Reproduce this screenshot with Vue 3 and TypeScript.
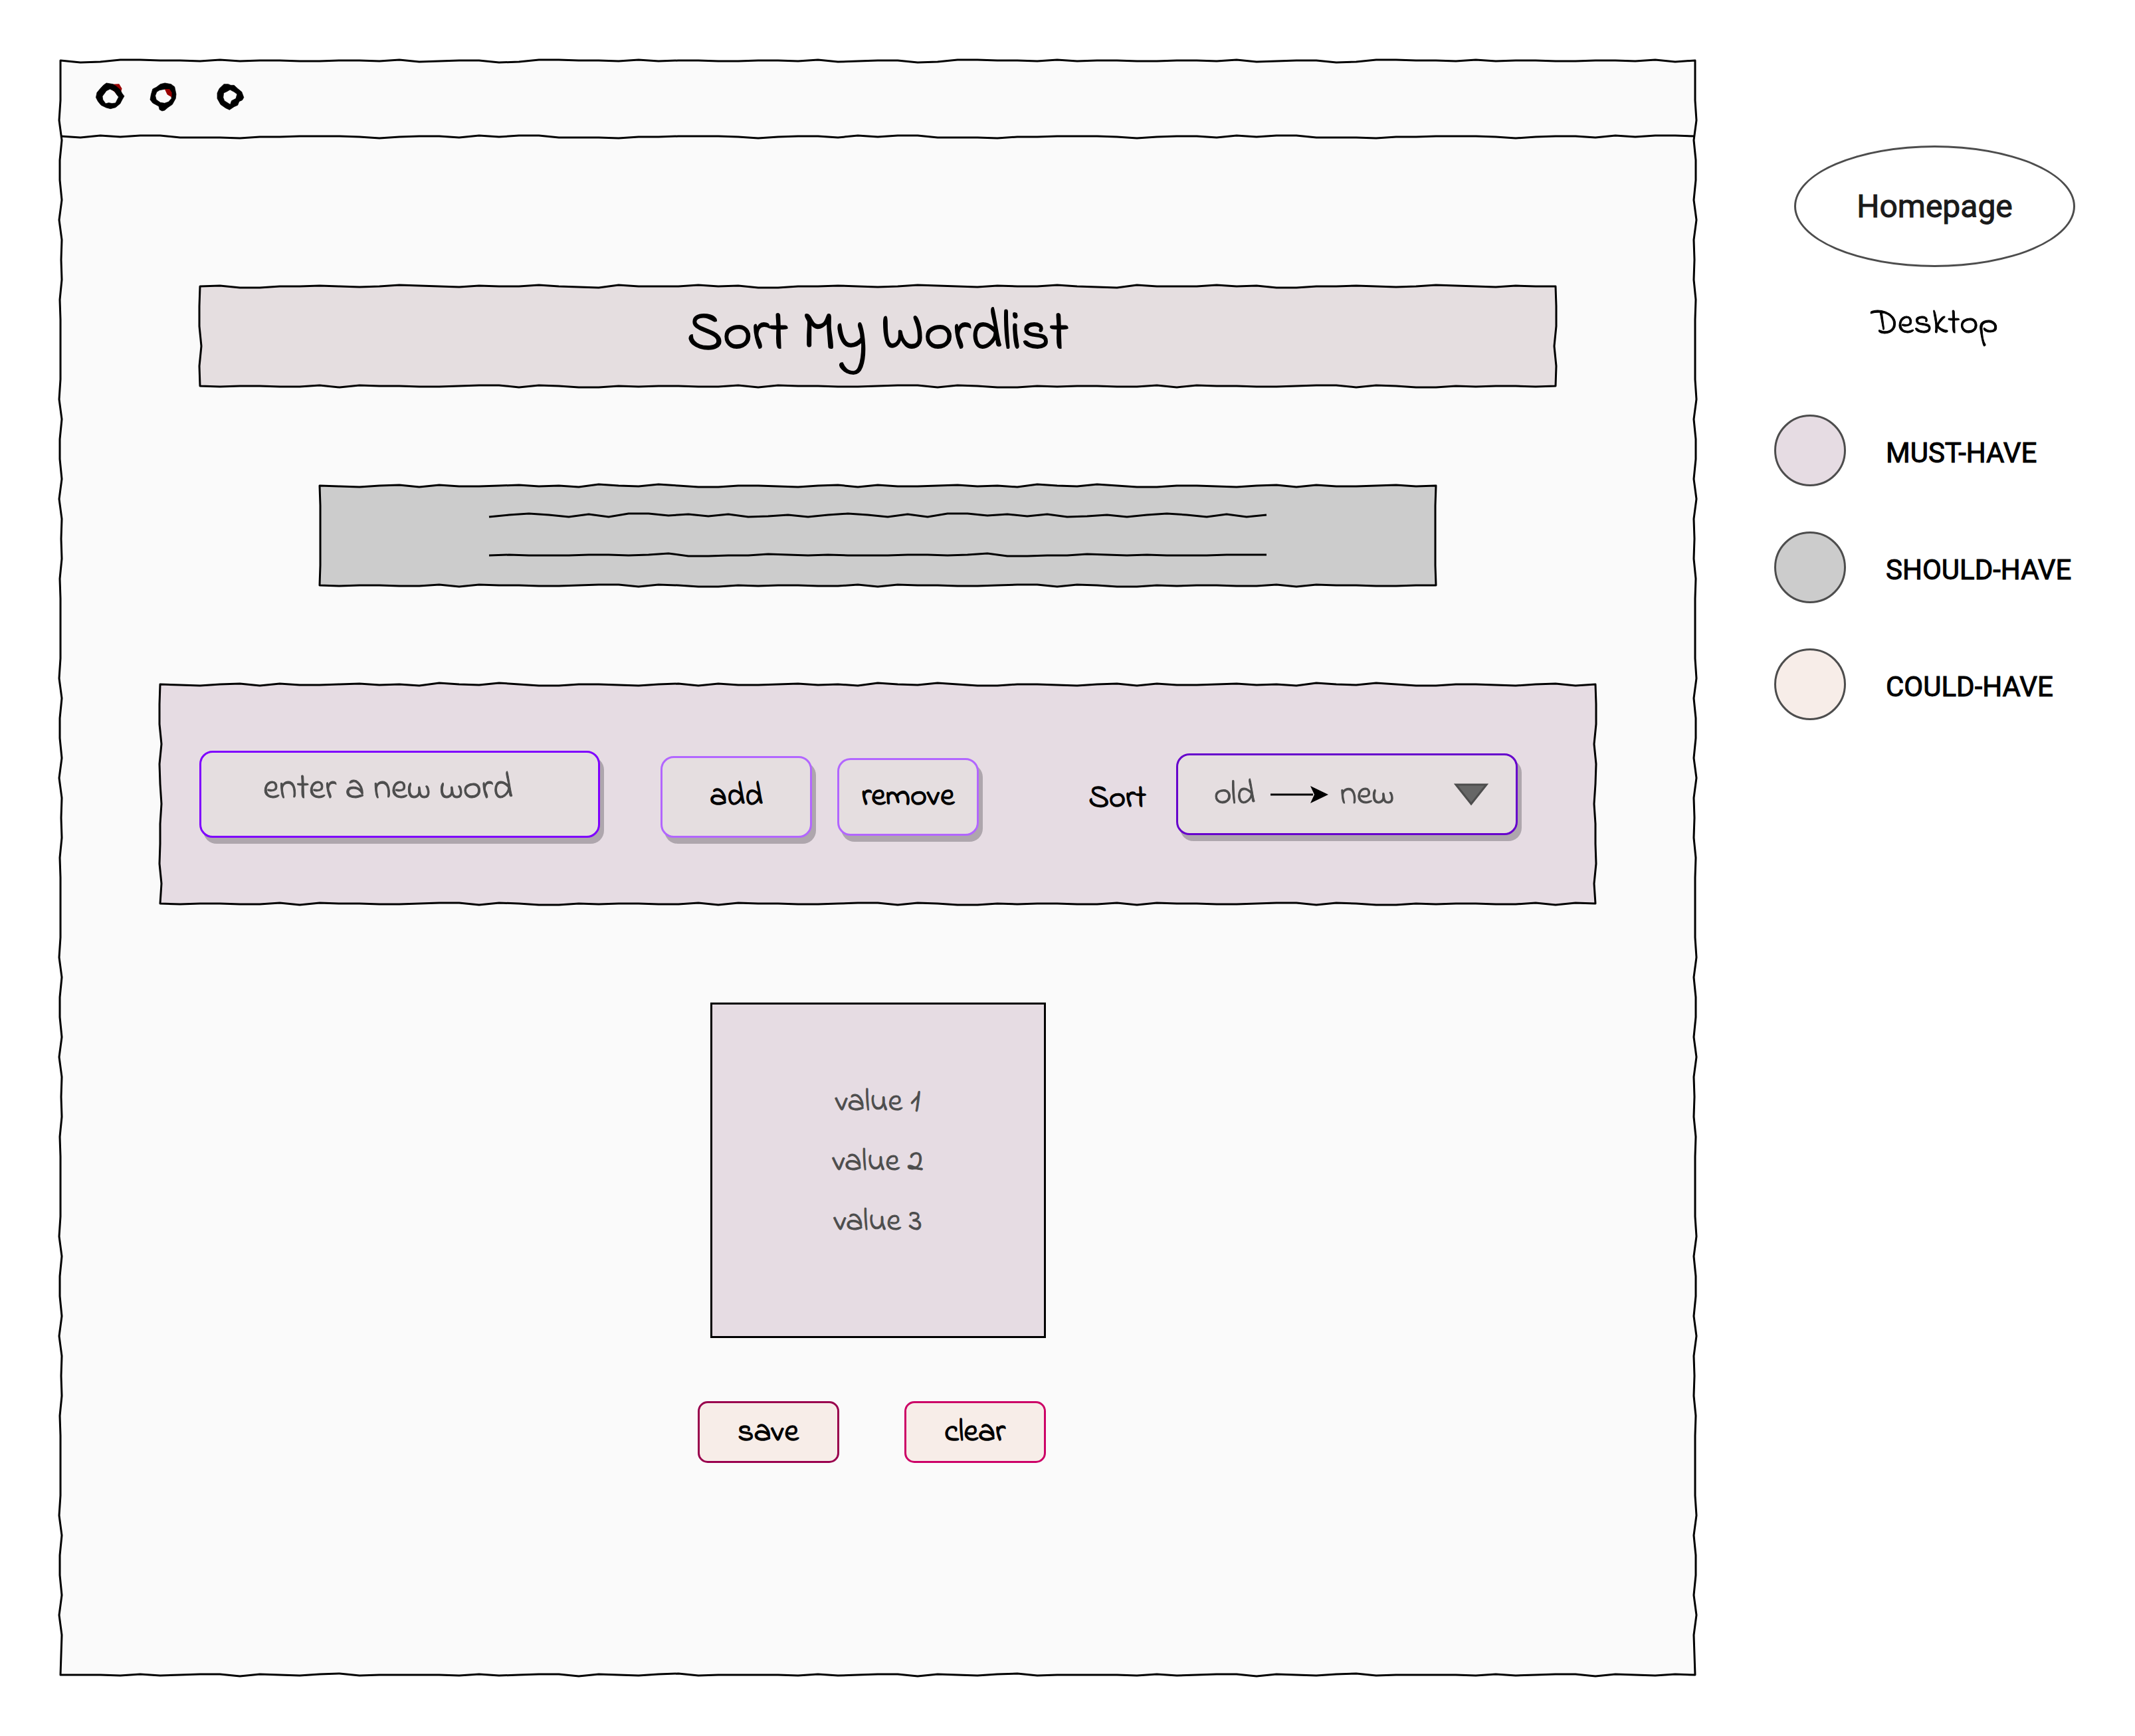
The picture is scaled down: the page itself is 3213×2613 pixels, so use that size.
<script setup lang="ts">
import { ref } from 'vue'

type Edge = number[]

interface LegendItem {
  label: string
  tone: string
}

const STEP = 30

/* Hand-drawn jitter, in pixels, for successive 30px steps along an edge. */
const frameTop: Edge = [0, 3, 2, -1, -1, 0, 0, 1, -1, 1, 0, 0, 1, 1, 0, 0, 1, -1, 2, 1, 0]
const frameSide: Edge = [0, 0, 0, -2, 2, -1, -1, 2, -2, 2, 1, 2, -1, 0]
const frameBottom: Edge = [0, 0, 0, 1, -1, 1, 0, -1, -1, 2, -1, 0, 1, -1, -2, 1, 0]
const dividerEdge: Edge = [0, 2, -1, 1, -1, -1, 2, 2, 2, 3, 1, 1, 0, 0, 0, 1, 3, 1, 0]
const panelTop: Edge = [0, -1, 2, 2, 0, 0, -1, 0, 1, 0, -2, -1, 0, 1, -1, 0, 0, -2, 0, 1, 2, -2, 0, 0, 0, -2]
const panelBottom: Edge = [0, 1, 0, 0, 1, 1, -1, 2, -1, 0, 0, 1, 1, 0, -1, -1, 2, -1, 0, 2, 2]
const panelSide: Edge = [0, -1, -1, 2, -1, 0, 2, 0, 0, -1, 2]
const greyTop: Edge = [0, 1, 2, 0, -1, 2, -1, 1, 1, 0, -1, 1, 0, 2, -2, 0, 1, -2, 0, 2, 2, 0]
const greySide: Edge = [0, 1, 1, 1, 1]
const ruleOne: Edge = [3, 0, -2, 0, 3, -1, 3, -2, -2, 1, -1, 2, -1, 3, 2, 0]
const ruleTwo: Edge = [1, 0, 1, 1, 1, 0, 0, 1, 0, -2, 2, 2, 1, 1, -1, 0]

function walk(length: number, edge: Edge): Array<[number, number]> {
  const count = Math.floor(length / STEP)
  const points: Array<[number, number]> = []
  for (let i = 1; i < count; i++) points.push([i * STEP, edge[i % edge.length]])
  return points
}

function sketchLine(length: number, edge: Edge): string {
  const middle = walk(length, edge).map(([x, y]) => `L${x} ${y}`)
  return `M0 ${edge[0]}${middle.join('')}L${length} 0`
}

function sketchBox(w: number, h: number, top: Edge, side: Edge, bottom: Edge): string {
  const north = walk(w, top).map(([x, y]) => `L${x} ${y}`)
  const east = walk(h, side).map(([y, x]) => `L${w - x} ${y}`)
  const south = walk(w, bottom).reverse().map(([x, y]) => `L${x} ${h + y}`)
  const west = walk(h, side).reverse().map(([y, x]) => `L${x} ${y}`)
  return `M0 0${north.join('')}L${w} 0${east.join('')}L${w} ${h}${south.join('')}L0 ${h}${west.join('')}Z`
}

const windowPath = sketchBox(2460, 2430, frameTop, frameSide, frameBottom)
const dividerPath = sketchLine(2460, dividerEdge)
const titlePath = sketchBox(2040, 150, panelTop, panelSide, panelBottom)
const greyPath = sketchBox(1680, 150, greyTop, greySide, panelBottom)
const controlsPath = sketchBox(2160, 330, greyTop, panelSide, panelBottom)
const ruleOnePath = sketchLine(1170, ruleOne)
const ruleTwoPath = sketchLine(1170, ruleTwo)

const word = ref('')
const order = ref('old-new')
const values = ['value 1', 'value 2', 'value 3']
const legend: LegendItem[] = [
  { label: 'MUST-HAVE', tone: 'must' },
  { label: 'SHOULD-HAVE', tone: 'should' },
  { label: 'COULD-HAVE', tone: 'could' },
]
</script>

<template>
  <div class="page">
    <main class="window">
      <svg class="sketch" viewBox="0 0 2460 2430" preserveAspectRatio="none" aria-hidden="true">
        <path class="fill-window" :d="windowPath" />
      </svg>

      <header class="titlebar">
        <svg class="dots" viewBox="186 150 627 150" preserveAspectRatio="none" aria-hidden="true">
          <path class="spot" d="M252 190L262 170L286 169L297 190L294 203L275 212Z" />
          <path class="ring" d="M236 165L262 170L275 180L290 195L298 212L306 224L298 240L290 258L272 275L252 281L235 276L215 265L203 248L195 230L199 208L212 190L224 175ZM250 192L268 202L275 215L284 228L272 255L258 257L245 254L233 258L222 240L220 225L236 200Z" />
          <path class="ring" d="M466 165L490 170L504 182L510 215L508 235L495 262L478 275L465 288L455 291L445 285L442 270L418 255L408 240L412 215L418 192L432 184L448 170ZM445 197L468 192L480 192L490 210L492 235L480 250L465 256L448 253L432 240L428 222L434 205Z" />
          <path class="spot" d="M465 192L484 192L493 208L493 229L475 217Z" />
          <path class="ring" d="M698 170L715 170L725 175L738 175L752 190L768 205L776 230L770 242L758 248L752 265L738 272L720 286L705 278L685 262L672 235L672 210L680 190ZM697 210L710 203L722 195L738 205L750 215L745 235L728 245L723 262L700 245L695 230Z" />
        </svg>
        <svg class="divider" viewBox="0 0 2460 2" preserveAspectRatio="none" aria-hidden="true">
          <path class="pen" :d="dividerPath" />
        </svg>
      </header>

      <div class="content">
        <section class="panel title-panel">
          <svg class="sketch" viewBox="0 0 2040 150" preserveAspectRatio="none" aria-hidden="true">
            <path class="fill-title" :d="titlePath" />
          </svg>
          <h1>Sort My Wordlist</h1>
        </section>

        <section class="panel text-panel">
          <svg class="sketch" viewBox="0 0 1680 150" preserveAspectRatio="none" aria-hidden="true">
            <path class="fill-grey" :d="greyPath" />
          </svg>
          <svg class="rule" viewBox="0 0 1170 2" preserveAspectRatio="none" aria-hidden="true">
            <path class="pen" :d="ruleOnePath" />
          </svg>
          <svg class="rule" viewBox="0 0 1170 2" preserveAspectRatio="none" aria-hidden="true">
            <path class="pen" :d="ruleTwoPath" />
          </svg>
        </section>

        <form class="panel controls" @submit.prevent>
          <svg class="sketch" viewBox="0 0 2160 330" preserveAspectRatio="none" aria-hidden="true">
            <path class="fill-must" :d="controlsPath" />
          </svg>
          <input v-model="word" class="field word" type="text" placeholder="enter a new word" aria-label="New word" />
          <div class="actions">
            <button class="field add" type="button">add</button>
            <button class="field remove" type="button">remove</button>
          </div>
          <label class="sort-label" for="sort-order">Sort</label>
          <div class="select-wrap">
            <select id="sort-order" v-model="order" class="field order">
              <option value="old-new">old&emsp;&emsp;&ensp;new</option>
              <option value="new-old">new&emsp;&emsp;&ensp;old</option>
            </select>
            <svg class="arrow" viewBox="0 0 88 28" aria-hidden="true">
              <path d="M0 14H64" fill="none" stroke="#000" stroke-width="3" />
              <path d="M87 14L60 27L66 14L60 1Z" />
            </svg>
            <svg class="caret" viewBox="0 0 52 34" aria-hidden="true">
              <path d="M3 2H49L26 31Z" fill="#666" stroke="#4d4d4d" stroke-width="3" />
            </svg>
          </div>
        </form>

        <section class="results">
          <ul class="values">
            <li v-for="value in values" :key="value">{{ value }}</li>
          </ul>
          <div class="result-actions">
            <button class="small save" type="button">save</button>
            <button class="small clear" type="button">clear</button>
          </div>
        </section>
      </div>
    </main>

    <aside class="notes">
      <div class="page-name">Homepage</div>
      <p class="device">Desktop</p>
      <ul class="legend">
        <li v-for="item in legend" :key="item.label">
          <span class="swatch" :class="item.tone"></span>
          <span class="legend-label">{{ item.label }}</span>
        </li>
      </ul>
    </aside>
  </div>
</template>

<style>
body {
  margin: 0;
  background: #fff;
}
</style>

<style scoped>
* {
  box-sizing: border-box;
}

.page {
  display: flex;
  padding: 91px 90px 92px 91px;
  font-family: "Indie Flower", Lato, sans-serif;
  font-size: 48px;
  line-height: 60px;
  color: #000;
  -webkit-text-stroke: 1px currentColor;
}

.window {
  position: relative;
  flex: 1;
}

.sketch {
  position: absolute;
  inset: 0;
  width: 100%;
  height: 100%;
  overflow: visible;
}

.sketch path,
.pen {
  stroke: #000;
  stroke-width: 3px;
  stroke-linejoin: round;
  vector-effect: non-scaling-stroke;
}

.pen {
  fill: none;
}

.fill-window {
  fill: #fafafa;
}

.fill-title {
  fill: #e5dee0;
}

.fill-grey {
  fill: #ccc;
}

.fill-must {
  fill: #e6dce3;
}

.titlebar {
  position: relative;
  display: flex;
  flex-direction: column;
  justify-content: space-between;
  height: 116px;
  padding-top: 29px;
}

.dots {
  display: block;
  width: 240px;
  height: 50px;
  margin-left: 50px;
}

.ring {
  fill: #000;
  fill-rule: evenodd;
  stroke: #000;
  stroke-width: 2px;
  stroke-linejoin: round;
}

.spot {
  fill: #900;
}

.divider,
.rule {
  display: block;
  width: 100%;
  height: 2px;
  overflow: visible;
}

.content {
  position: relative;
  padding: 224px 150px 319px;
}

.panel {
  position: relative;
}

.title-panel {
  display: flex;
  align-items: center;
  justify-content: center;
  height: 150px;
  margin: 0 60px 150px;
}

h1 {
  position: relative;
  margin: 0;
  padding-bottom: 4px;
  font-size: 84px;
  font-weight: 400;
  line-height: 90px;
  -webkit-text-stroke-width: 2px;
}

.text-panel {
  display: flex;
  flex-direction: column;
  gap: 58px;
  height: 150px;
  margin: 0 240px 149px;
  padding: 44px 255px 0;
}

.rule {
  position: relative;
}

.controls {
  display: flex;
  align-items: center;
  height: 330px;
  padding: 0 117px 0 59px;
}

.field {
  position: relative;
  margin: 0;
  border: 3px solid #b266ff;
  border-radius: 20px;
  background: #e5dee0;
  box-shadow: 6px 9px 0 #aea6ad;
  color: #000;
  font: inherit;
  -webkit-text-stroke: 1px currentColor;
}

.word {
  width: 603px;
  height: 131px;
  padding: 0 90px 14px 93px;
  border-color: #7f00ff;
  font-size: 54px;
}

.word::placeholder {
  color: #4d4d4d;
  opacity: 1;
}

.actions {
  position: relative;
  display: flex;
  align-items: center;
  gap: 38px;
  margin: 8px 0 0 91px;
}

.add,
.remove,
.small {
  padding: 0;
  font-weight: 700;
  -webkit-text-stroke-width: 0;
}

.add {
  width: 228px;
  height: 123px;
}

.remove {
  width: 213px;
  height: 117px;
}

.sort-label {
  position: relative;
  margin-left: auto;
  padding-top: 14px;
  font-weight: 700;
  -webkit-text-stroke-width: 0;
}

.select-wrap {
  position: relative;
  margin-left: 45px;
}

.order {
  display: block;
  width: 514px;
  height: 123px;
  padding: 4px 0 0 54px;
  border-color: #60c;
  color: #4d4d4d;
  font-size: 51px;
  appearance: none;
}

.arrow {
  position: absolute;
  left: 142px;
  top: 48px;
  width: 88px;
  height: 28px;
  pointer-events: none;
}

.caret {
  position: absolute;
  right: 44px;
  top: 45px;
  width: 52px;
  height: 34px;
  pointer-events: none;
}

.results {
  width: 543px;
  margin: 149px auto 0;
}

.values {
  display: flex;
  flex-direction: column;
  gap: 30px;
  height: 505px;
  margin: 0 19px;
  padding: 117px 0 0;
  border: 3px solid #000;
  background: #e6dce3;
  color: #4d4d4d;
  text-align: center;
  list-style: none;
}

.result-actions {
  display: flex;
  gap: 98px;
  margin-top: 95px;
}

.small {
  width: 213px;
  height: 93px;
  margin: 0;
  border: 3px solid #99004d;
  border-radius: 15px;
  background: #f7ede8;
  color: #000;
  font-family: inherit;
  font-size: 48px;
  line-height: 60px;
}

.clear {
  border-color: #cc0066;
}

.notes {
  width: 453px;
  margin: 128px 0 0 119px;
}

.page-name {
  display: flex;
  align-items: center;
  justify-content: center;
  height: 183px;
  margin-left: 30px;
  border: 3px solid #4d4d4d;
  border-radius: 50%;
  color: #1a1a1a;
  font-family: Roboto, sans-serif;
}

.device {
  margin: 56px 0 106px 30px;
  font-size: 54px;
  text-align: center;
}

.legend {
  display: flex;
  flex-direction: column;
  gap: 68px;
  margin: 0;
  padding: 0;
  font-family: Roboto, sans-serif;
  font-size: 42px;
  list-style: none;
}

.page-name,
.legend {
  -webkit-text-stroke: 1px currentColor;
}

.legend li {
  display: flex;
  align-items: center;
  gap: 60px;
}

.legend-label {
  padding-top: 8px;
  white-space: nowrap;
}

.swatch {
  flex: none;
  width: 108px;
  height: 108px;
  border: 3px solid #4d4d4d;
  border-radius: 50%;
}

.must {
  background: #e6dce3;
}

.should {
  background: #ccc;
}

.could {
  background: #f7ede8;
}
</style>
